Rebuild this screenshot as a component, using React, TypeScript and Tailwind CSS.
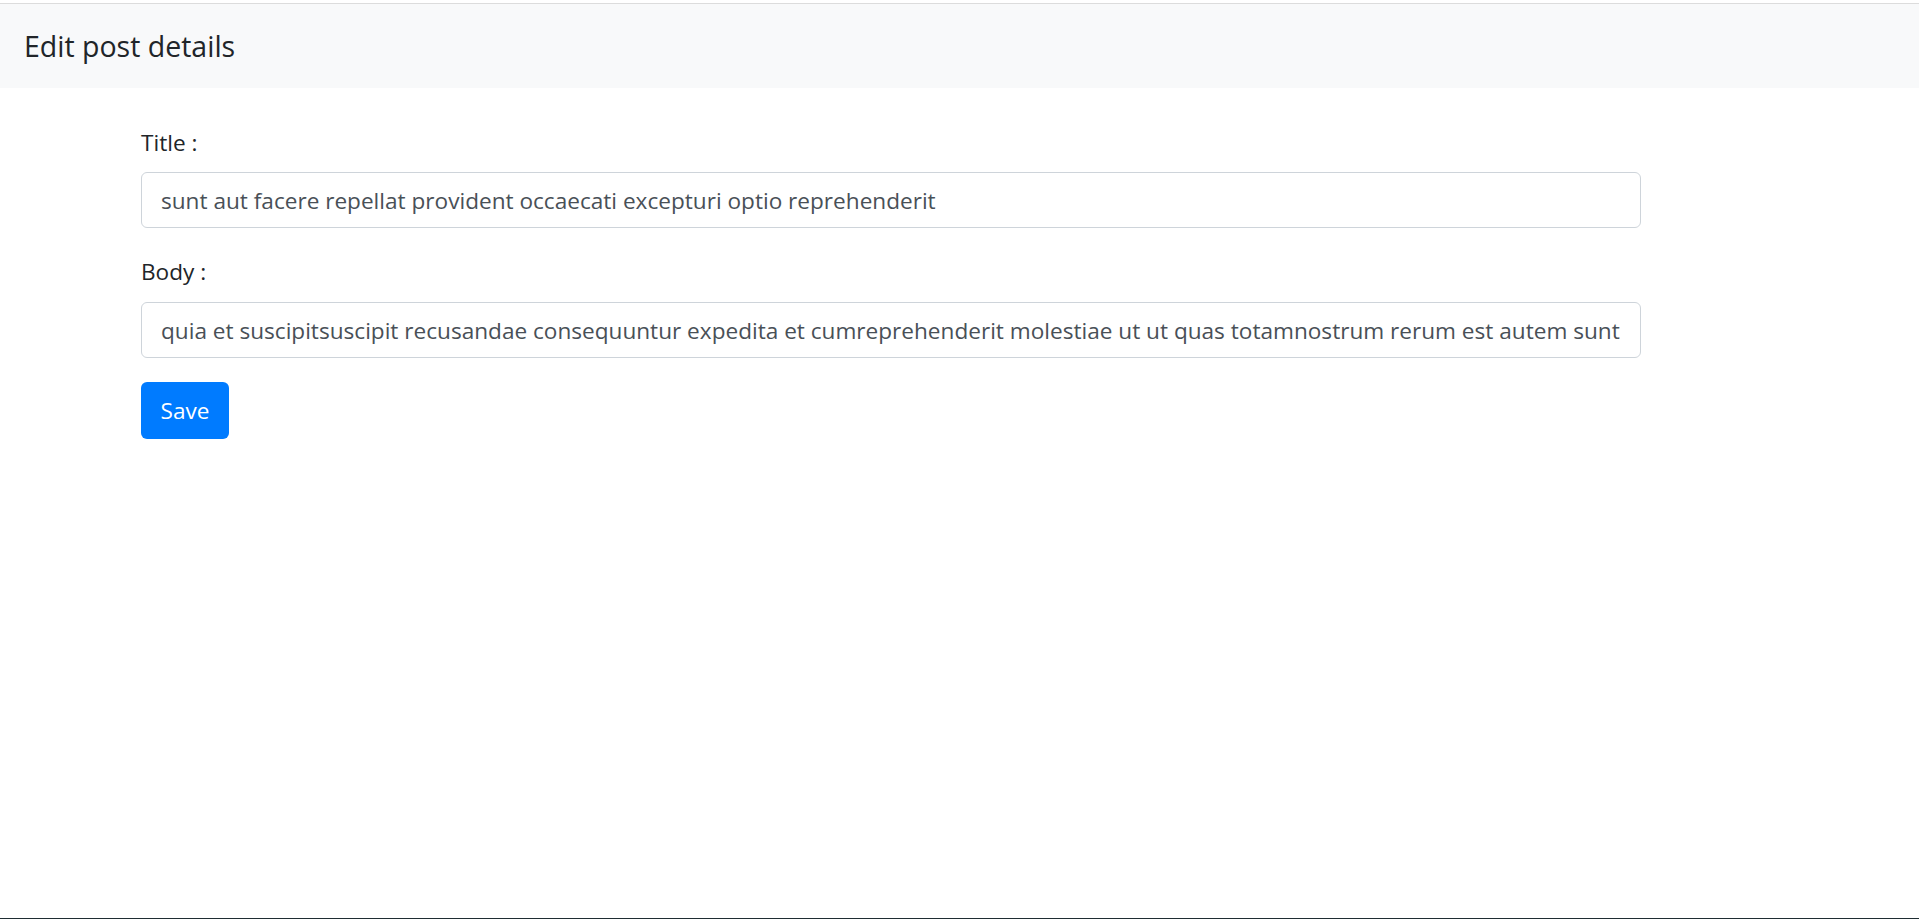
import React from "react";

export default function App() {
  const font = { fontFamily: '"Open Sans", "Noto Sans", sans-serif' };
  return (
    <div className="min-h-screen flex flex-col bg-white" style={font}>
      <div className="h-[3px] bg-white" />
      <div className="h-px bg-[#dcdcdc]" />
      <header className="h-[84px] bg-[#f8f9fa] flex items-center pl-[24px]">
        <h1 className="text-[28.5px] text-[#212529] leading-none m-0 font-normal">Edit post details</h1>
      </header>
      <main className="flex-1 pl-[141px]">
        <form className="w-[1500px] flex flex-col" onSubmit={(e) => e.preventDefault()}>
          <label className="mt-[37px] mb-[11px] text-[22.6px] leading-[36px] text-[#212529]">Title :</label>
          <input
            className="h-[56px] w-full border border-[#ced4da] rounded-[6px] px-[19px] text-[22.6px] text-[#495057] bg-white outline-none"
            defaultValue="sunt aut facere repellat provident occaecati excepturi optio reprehenderit"
          />
          <label className="mt-[26px] mb-[12px] text-[22.6px] leading-[36px] text-[#212529]">Body :</label>
          <input
            className="h-[56px] w-full border border-[#ced4da] rounded-[6px] px-[19px] text-[22.6px] text-[#495057] bg-white outline-none"
            defaultValue="quia et suscipitsuscipit recusandae consequuntur expedita et cumreprehenderit molestiae ut ut quas totamnostrum rerum est autem sunt rem eveniet architecto"
          />
          <div className="mt-[24px]">
            <button
              type="submit"
              className="h-[57px] w-[88px] rounded-[6px] bg-[#007bff] text-white text-[22.6px] flex items-center justify-center"
            >
              Save
            </button>
          </div>
        </form>
      </main>
      <div className="h-px bg-[#1f2d33]" />
    </div>
  );
}
